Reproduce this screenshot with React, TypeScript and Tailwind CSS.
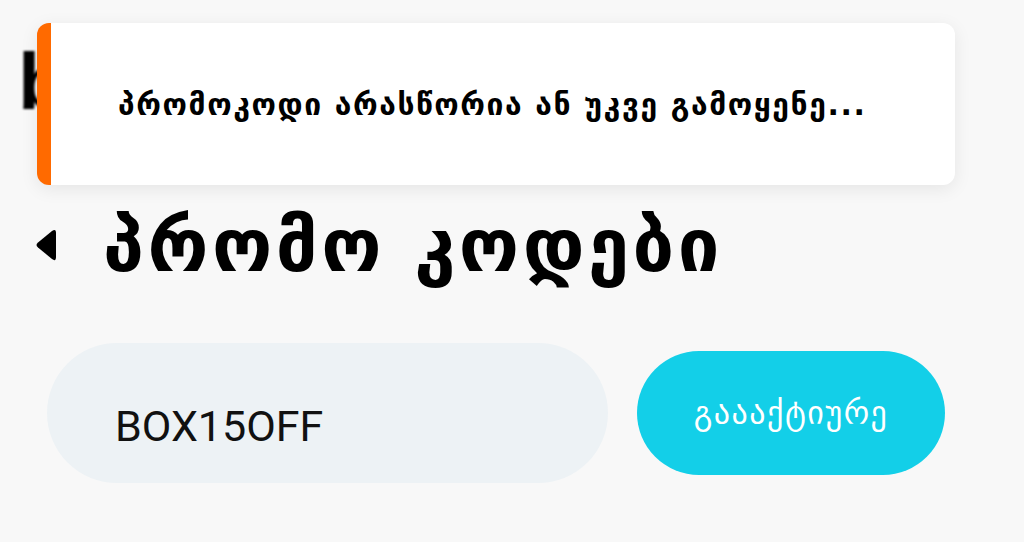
export default function App() {
  return (
    <div className="relative w-full h-screen overflow-hidden bg-[#f8f8f8] font-['DejaVu_Sans',sans-serif]">
      {/* Page heading partly covered by the toast */}
      <div className="h-[190px] pl-[18px] pt-[42px]">
        <h1 className="text-[80px] leading-none font-bold text-black blur-[1px] font-['Liberation_Sans',sans-serif]">
          b
        </h1>
      </div>

      {/* Title row */}
      <div className="flex h-[110px] items-center gap-[46px] pl-[35px]">
        <svg width="22" height="34" viewBox="0 0 22 34" className="shrink-0">
          <path d="M3 19.5 L17 31 Q21 34 21 29 L21 5 Q21 0 17 3 L3 14.5 Q0 17 3 19.5 Z" fill="#000" />
        </svg>
        <h2 className="text-[74px] font-bold leading-none tracking-[3.5px] text-black">პრომო კოდები</h2>
      </div>

      {/* Promo code input */}
      <div className="mt-[43px] flex items-center gap-[29px] pl-[47px]">
        <div className="flex h-[140px] w-[561px] items-center rounded-full bg-[#edf2f5] pl-[68px] pt-[26px]">
          <span className="font-['Roboto',sans-serif] text-[43px] text-[#111]">BOX15OFF</span>
        </div>
        <button className="flex h-[124px] w-[308px] items-center justify-center rounded-full bg-[#13cfe8] text-[32px] tracking-[1.5px] text-white">
          გაააქტიურე
        </button>
      </div>

      {/* Toast */}
      <div className="absolute left-[37px] top-[23px] flex h-[162px] w-[918px] items-center rounded-xl border-l-[14px] border-[#ff6a00] bg-white pl-[67px] shadow-[0_4px_18px_rgba(0,0,0,0.08)]">
        <p className="text-[30px] font-bold tracking-[1.6px] text-black">პრომოკოდი არასწორია ან უკვე გამოყენე...</p>
      </div>
    </div>
  );
}
